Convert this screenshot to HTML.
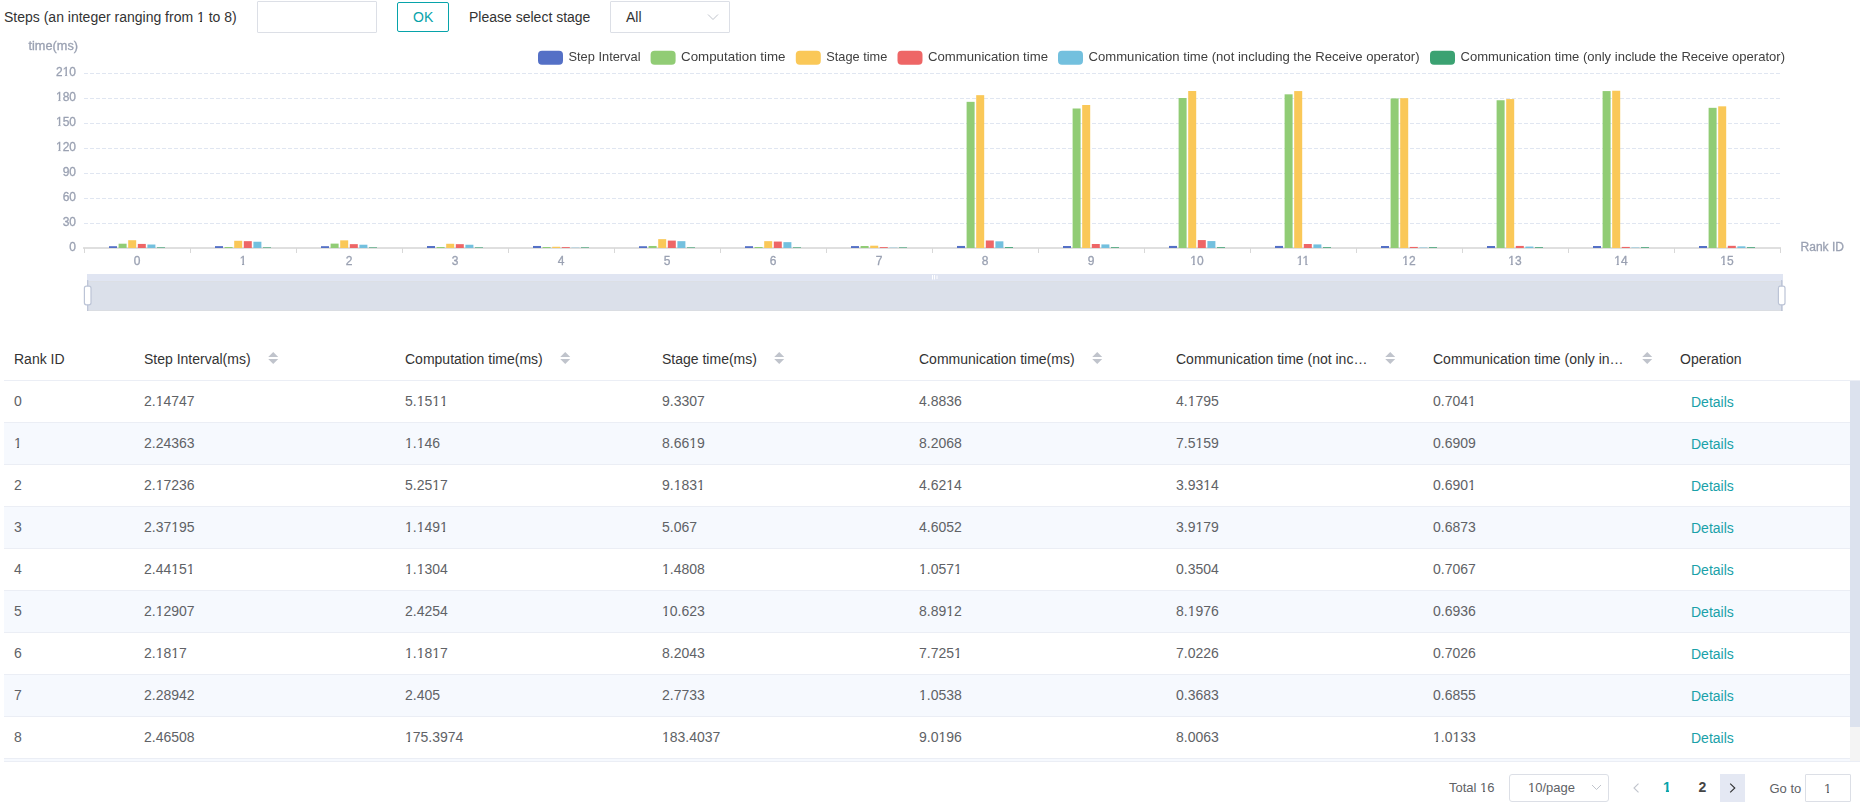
<!DOCTYPE html>
<html><head><meta charset="utf-8"><title>Rank stats</title>
<style>
html,body{margin:0;padding:0;background:#fff;}
body{width:1869px;height:808px;overflow:hidden;position:relative;font-family:'Liberation Sans', sans-serif;}
.a{position:absolute;white-space:nowrap;}
.t14{font-size:14px;line-height:20px;}
.t13{font-size:13px;line-height:20px;}
.box{position:absolute;box-sizing:border-box;background:#fff;}
.o14{display:inline-block;clip-path:polygon(-2px -2px,120% -2px,120% 13.85px,5.05px 13.85px,5.05px 22px,2.85px 22px,2.85px 13.85px,-2px 13.85px);}
.o13{display:inline-block;clip-path:polygon(-2px -2px,120% -2px,120% 12.85px,5.05px 12.85px,5.05px 22px,2.85px 22px,2.85px 12.85px,-2px 12.85px);}
.o14b{display:inline-block;clip-path:polygon(-2px -2px,120% -2px,120% 12.85px,6.05px 12.85px,6.05px 22px,2.9px 22px,2.9px 12.85px,-2px 12.85px);}
.o13b{display:inline-block;clip-path:polygon(-2px -2px,120% -2px,120% 12.6px,5.2px 12.6px,5.2px 22px,2.75px 22px,2.75px 12.6px,-2px 12.6px);}
</style></head><body>
<div class="a t14" style="left:4px;top:7px;color:#333;">Steps (an integer ranging from <span class="o14">1</span> to 8)</div>
<div class="box" style="left:257px;top:1px;width:120px;height:32px;border:1px solid #dcdfe6;border-radius:1px;"></div>
<div class="box" style="left:397px;top:2px;width:52px;height:30px;border:1px solid #07a3aa;border-radius:2px;"></div>
<div class="a t14" style="left:413px;top:7px;color:#07a3aa;">OK</div>
<div class="a t14" style="left:469px;top:7px;color:#333;">Please select stage</div>
<div class="box" style="left:610px;top:1px;width:120px;height:32px;border:1px solid #dcdfe6;border-radius:1px;"></div>
<div class="a t14" style="left:626px;top:7px;color:#333;">All</div>
<svg class="a" style="left:706.5px;top:13px" width="12" height="8" viewBox="0 0 12 8"><path d="M1 1.5 L6 6.5 L11 1.5" fill="none" stroke="#c0c4cc" stroke-width="1"/></svg>
<svg class="a" style="left:0;top:0;will-change:transform" width="1869" height="320" viewBox="0 0 1869 320" font-family="'Liberation Sans', sans-serif">
<text x="28.5" y="50" font-size="12" fill="#9aa1b2" stroke="#9aa1b2" stroke-width="0.3" textLength="49.5" lengthAdjust="spacingAndGlyphs">time(ms)</text>
<text x="76" y="250.8" font-size="12" fill="#9aa1b2" stroke="#9aa1b2" stroke-width="0.3" text-anchor="end">0</text>
<line x1="84" y1="223.5" x2="1781" y2="223.5" stroke="#e0e6f1" stroke-width="1" stroke-dasharray="4 2"/>
<text x="76" y="225.8" font-size="12" fill="#9aa1b2" stroke="#9aa1b2" stroke-width="0.3" text-anchor="end">30</text>
<line x1="84" y1="198.5" x2="1781" y2="198.5" stroke="#e0e6f1" stroke-width="1" stroke-dasharray="4 2"/>
<text x="76" y="200.8" font-size="12" fill="#9aa1b2" stroke="#9aa1b2" stroke-width="0.3" text-anchor="end">60</text>
<line x1="84" y1="173.5" x2="1781" y2="173.5" stroke="#e0e6f1" stroke-width="1" stroke-dasharray="4 2"/>
<text x="76" y="175.8" font-size="12" fill="#9aa1b2" stroke="#9aa1b2" stroke-width="0.3" text-anchor="end">90</text>
<line x1="84" y1="148.5" x2="1781" y2="148.5" stroke="#e0e6f1" stroke-width="1" stroke-dasharray="4 2"/>
<text x="76" y="150.8" font-size="12" fill="#9aa1b2" stroke="#9aa1b2" stroke-width="0.3" text-anchor="end">120</text>
<line x1="84" y1="123.5" x2="1781" y2="123.5" stroke="#e0e6f1" stroke-width="1" stroke-dasharray="4 2"/>
<text x="76" y="125.8" font-size="12" fill="#9aa1b2" stroke="#9aa1b2" stroke-width="0.3" text-anchor="end">150</text>
<line x1="84" y1="98.5" x2="1781" y2="98.5" stroke="#e0e6f1" stroke-width="1" stroke-dasharray="4 2"/>
<text x="76" y="100.8" font-size="12" fill="#9aa1b2" stroke="#9aa1b2" stroke-width="0.3" text-anchor="end">180</text>
<line x1="84" y1="73.5" x2="1781" y2="73.5" stroke="#e0e6f1" stroke-width="1" stroke-dasharray="4 2"/>
<text x="76" y="75.8" font-size="12" fill="#9aa1b2" stroke="#9aa1b2" stroke-width="0.3" text-anchor="end">210</text>
<line x1="83" y1="248" x2="1781" y2="248" stroke="#d4d4d4" stroke-width="1.5"/>
<line x1="84.5" y1="248" x2="84.5" y2="253" stroke="#d8d8d8" stroke-width="1"/>
<line x1="190.5" y1="248" x2="190.5" y2="253" stroke="#d8d8d8" stroke-width="1"/>
<line x1="296.5" y1="248" x2="296.5" y2="253" stroke="#d8d8d8" stroke-width="1"/>
<line x1="402.5" y1="248" x2="402.5" y2="253" stroke="#d8d8d8" stroke-width="1"/>
<line x1="508.5" y1="248" x2="508.5" y2="253" stroke="#d8d8d8" stroke-width="1"/>
<line x1="614.5" y1="248" x2="614.5" y2="253" stroke="#d8d8d8" stroke-width="1"/>
<line x1="720.5" y1="248" x2="720.5" y2="253" stroke="#d8d8d8" stroke-width="1"/>
<line x1="826.5" y1="248" x2="826.5" y2="253" stroke="#d8d8d8" stroke-width="1"/>
<line x1="932.5" y1="248" x2="932.5" y2="253" stroke="#d8d8d8" stroke-width="1"/>
<line x1="1038.5" y1="248" x2="1038.5" y2="253" stroke="#d8d8d8" stroke-width="1"/>
<line x1="1144.5" y1="248" x2="1144.5" y2="253" stroke="#d8d8d8" stroke-width="1"/>
<line x1="1250.5" y1="248" x2="1250.5" y2="253" stroke="#d8d8d8" stroke-width="1"/>
<line x1="1356.5" y1="248" x2="1356.5" y2="253" stroke="#d8d8d8" stroke-width="1"/>
<line x1="1462.5" y1="248" x2="1462.5" y2="253" stroke="#d8d8d8" stroke-width="1"/>
<line x1="1568.5" y1="248" x2="1568.5" y2="253" stroke="#d8d8d8" stroke-width="1"/>
<line x1="1674.5" y1="248" x2="1674.5" y2="253" stroke="#d8d8d8" stroke-width="1"/>
<line x1="1780.5" y1="248" x2="1780.5" y2="253" stroke="#d8d8d8" stroke-width="1"/>
<text x="137" y="265" font-size="12" fill="#9aa1b2" stroke="#9aa1b2" stroke-width="0.3" text-anchor="middle">0</text>
<text x="243" y="265" font-size="12" fill="#9aa1b2" stroke="#9aa1b2" stroke-width="0.3" text-anchor="middle">1</text>
<text x="349" y="265" font-size="12" fill="#9aa1b2" stroke="#9aa1b2" stroke-width="0.3" text-anchor="middle">2</text>
<text x="455" y="265" font-size="12" fill="#9aa1b2" stroke="#9aa1b2" stroke-width="0.3" text-anchor="middle">3</text>
<text x="561" y="265" font-size="12" fill="#9aa1b2" stroke="#9aa1b2" stroke-width="0.3" text-anchor="middle">4</text>
<text x="667" y="265" font-size="12" fill="#9aa1b2" stroke="#9aa1b2" stroke-width="0.3" text-anchor="middle">5</text>
<text x="773" y="265" font-size="12" fill="#9aa1b2" stroke="#9aa1b2" stroke-width="0.3" text-anchor="middle">6</text>
<text x="879" y="265" font-size="12" fill="#9aa1b2" stroke="#9aa1b2" stroke-width="0.3" text-anchor="middle">7</text>
<text x="985" y="265" font-size="12" fill="#9aa1b2" stroke="#9aa1b2" stroke-width="0.3" text-anchor="middle">8</text>
<text x="1091" y="265" font-size="12" fill="#9aa1b2" stroke="#9aa1b2" stroke-width="0.3" text-anchor="middle">9</text>
<text x="1197" y="265" font-size="12" fill="#9aa1b2" stroke="#9aa1b2" stroke-width="0.3" text-anchor="middle">10</text>
<text x="1303" y="265" font-size="12" fill="#9aa1b2" stroke="#9aa1b2" stroke-width="0.3" text-anchor="middle">11</text>
<text x="1409" y="265" font-size="12" fill="#9aa1b2" stroke="#9aa1b2" stroke-width="0.3" text-anchor="middle">12</text>
<text x="1515" y="265" font-size="12" fill="#9aa1b2" stroke="#9aa1b2" stroke-width="0.3" text-anchor="middle">13</text>
<text x="1621" y="265" font-size="12" fill="#9aa1b2" stroke="#9aa1b2" stroke-width="0.3" text-anchor="middle">14</text>
<text x="1727" y="265" font-size="12" fill="#9aa1b2" stroke="#9aa1b2" stroke-width="0.3" text-anchor="middle">15</text>
<rect x="55.38" y="149.55" width="2.9" height="2.3" fill="#fff"/>
<rect x="60.53" y="149.55" width="2.4" height="2.3" fill="#fff"/>
<rect x="58.18" y="150.90" width="2.5" height="1" fill="#fff"/>
<rect x="55.38" y="124.55" width="2.9" height="2.3" fill="#fff"/>
<rect x="60.53" y="124.55" width="2.4" height="2.3" fill="#fff"/>
<rect x="58.18" y="125.90" width="2.5" height="1" fill="#fff"/>
<rect x="55.38" y="99.55" width="2.9" height="2.3" fill="#fff"/>
<rect x="60.53" y="99.55" width="2.4" height="2.3" fill="#fff"/>
<rect x="58.18" y="100.90" width="2.5" height="1" fill="#fff"/>
<rect x="62.06" y="74.55" width="2.9" height="2.3" fill="#fff"/>
<rect x="67.21" y="74.55" width="2.4" height="2.3" fill="#fff"/>
<rect x="64.86" y="75.90" width="2.5" height="1" fill="#fff"/>
<rect x="239.06" y="263.75" width="2.9" height="2.3" fill="#fff"/>
<rect x="244.21" y="263.75" width="2.4" height="2.3" fill="#fff"/>
<rect x="241.86" y="265.10" width="2.5" height="1" fill="#fff"/>
<rect x="1189.73" y="263.75" width="2.9" height="2.3" fill="#fff"/>
<rect x="1194.88" y="263.75" width="2.4" height="2.3" fill="#fff"/>
<rect x="1192.53" y="265.10" width="2.5" height="1" fill="#fff"/>
<rect x="1295.73" y="263.75" width="2.9" height="2.3" fill="#fff"/>
<rect x="1300.88" y="263.75" width="2.4" height="2.3" fill="#fff"/>
<rect x="1298.53" y="265.10" width="2.5" height="1" fill="#fff"/>
<rect x="1302.40" y="263.75" width="2.9" height="2.3" fill="#fff"/>
<rect x="1307.55" y="263.75" width="2.4" height="2.3" fill="#fff"/>
<rect x="1305.20" y="265.10" width="2.5" height="1" fill="#fff"/>
<rect x="1401.73" y="263.75" width="2.9" height="2.3" fill="#fff"/>
<rect x="1406.88" y="263.75" width="2.4" height="2.3" fill="#fff"/>
<rect x="1404.53" y="265.10" width="2.5" height="1" fill="#fff"/>
<rect x="1507.73" y="263.75" width="2.9" height="2.3" fill="#fff"/>
<rect x="1512.88" y="263.75" width="2.4" height="2.3" fill="#fff"/>
<rect x="1510.53" y="265.10" width="2.5" height="1" fill="#fff"/>
<rect x="1613.73" y="263.75" width="2.9" height="2.3" fill="#fff"/>
<rect x="1618.88" y="263.75" width="2.4" height="2.3" fill="#fff"/>
<rect x="1616.53" y="265.10" width="2.5" height="1" fill="#fff"/>
<rect x="1719.73" y="263.75" width="2.9" height="2.3" fill="#fff"/>
<rect x="1724.88" y="263.75" width="2.4" height="2.3" fill="#fff"/>
<rect x="1722.53" y="265.10" width="2.5" height="1" fill="#fff"/>
<text x="1800.5" y="251" font-size="12" fill="#9aa1b2" stroke="#9aa1b2" stroke-width="0.3" textLength="43.5" lengthAdjust="spacingAndGlyphs">Rank ID</text>
<rect x="109.00" y="246.21" width="8" height="1.79" fill="#5470c6"/>
<rect x="118.60" y="243.71" width="8" height="4.29" fill="#91cc75"/>
<rect x="128.20" y="240.22" width="8" height="7.78" fill="#fac858"/>
<rect x="137.80" y="243.93" width="8" height="4.07" fill="#ee6666"/>
<rect x="147.40" y="244.52" width="8" height="3.48" fill="#73c0de"/>
<rect x="157.00" y="247.41" width="8" height="0.59" fill="#3ba272"/>
<rect x="215.00" y="246.13" width="8" height="1.87" fill="#5470c6"/>
<rect x="224.60" y="247.04" width="8" height="0.95" fill="#91cc75"/>
<rect x="234.20" y="240.78" width="8" height="7.22" fill="#fac858"/>
<rect x="243.80" y="241.16" width="8" height="6.84" fill="#ee6666"/>
<rect x="253.40" y="241.74" width="8" height="6.26" fill="#73c0de"/>
<rect x="263.00" y="247.42" width="8" height="0.58" fill="#3ba272"/>
<rect x="321.00" y="246.19" width="8" height="1.81" fill="#5470c6"/>
<rect x="330.60" y="243.62" width="8" height="4.38" fill="#91cc75"/>
<rect x="340.20" y="240.35" width="8" height="7.65" fill="#fac858"/>
<rect x="349.80" y="244.15" width="8" height="3.85" fill="#ee6666"/>
<rect x="359.40" y="244.72" width="8" height="3.28" fill="#73c0de"/>
<rect x="369.00" y="247.42" width="8" height="0.58" fill="#3ba272"/>
<rect x="427.00" y="246.02" width="8" height="1.98" fill="#5470c6"/>
<rect x="436.60" y="247.04" width="8" height="0.96" fill="#91cc75"/>
<rect x="446.20" y="243.78" width="8" height="4.22" fill="#fac858"/>
<rect x="455.80" y="244.16" width="8" height="3.84" fill="#ee6666"/>
<rect x="465.40" y="244.74" width="8" height="3.26" fill="#73c0de"/>
<rect x="475.00" y="247.43" width="8" height="0.57" fill="#3ba272"/>
<rect x="533.00" y="245.97" width="8" height="2.03" fill="#5470c6"/>
<rect x="542.60" y="247.06" width="8" height="0.94" fill="#91cc75"/>
<rect x="552.20" y="246.77" width="8" height="1.23" fill="#fac858"/>
<rect x="561.80" y="247.12" width="8" height="0.88" fill="#ee6666"/>
<rect x="571.40" y="247.71" width="8" height="0.29" fill="#73c0de"/>
<rect x="581.00" y="247.41" width="8" height="0.59" fill="#3ba272"/>
<rect x="639.00" y="246.23" width="8" height="1.77" fill="#5470c6"/>
<rect x="648.60" y="245.98" width="8" height="2.02" fill="#91cc75"/>
<rect x="658.20" y="239.15" width="8" height="8.85" fill="#fac858"/>
<rect x="667.80" y="240.59" width="8" height="7.41" fill="#ee6666"/>
<rect x="677.40" y="241.17" width="8" height="6.83" fill="#73c0de"/>
<rect x="687.00" y="247.42" width="8" height="0.58" fill="#3ba272"/>
<rect x="745.00" y="246.18" width="8" height="1.82" fill="#5470c6"/>
<rect x="754.60" y="247.02" width="8" height="0.98" fill="#91cc75"/>
<rect x="764.20" y="241.16" width="8" height="6.84" fill="#fac858"/>
<rect x="773.80" y="241.56" width="8" height="6.44" fill="#ee6666"/>
<rect x="783.40" y="242.15" width="8" height="5.85" fill="#73c0de"/>
<rect x="793.00" y="247.41" width="8" height="0.59" fill="#3ba272"/>
<rect x="851.00" y="246.09" width="8" height="1.91" fill="#5470c6"/>
<rect x="860.60" y="246.00" width="8" height="2.00" fill="#91cc75"/>
<rect x="870.20" y="245.69" width="8" height="2.31" fill="#fac858"/>
<rect x="879.80" y="247.12" width="8" height="0.88" fill="#ee6666"/>
<rect x="889.40" y="247.69" width="8" height="0.31" fill="#73c0de"/>
<rect x="899.00" y="247.43" width="8" height="0.57" fill="#3ba272"/>
<rect x="957.00" y="245.95" width="8" height="2.05" fill="#5470c6"/>
<rect x="966.60" y="101.84" width="8" height="146.16" fill="#91cc75"/>
<rect x="976.20" y="95.16" width="8" height="152.84" fill="#fac858"/>
<rect x="985.80" y="240.48" width="8" height="7.52" fill="#ee6666"/>
<rect x="995.40" y="241.33" width="8" height="6.67" fill="#73c0de"/>
<rect x="1005.00" y="247.16" width="8" height="0.84" fill="#3ba272"/>
<rect x="1063.00" y="246.00" width="8" height="2.00" fill="#5470c6"/>
<rect x="1072.60" y="108.50" width="8" height="139.50" fill="#91cc75"/>
<rect x="1082.20" y="105.00" width="8" height="143.00" fill="#fac858"/>
<rect x="1091.80" y="244.00" width="8" height="4.00" fill="#ee6666"/>
<rect x="1101.40" y="244.42" width="8" height="3.58" fill="#73c0de"/>
<rect x="1111.00" y="247.25" width="8" height="0.75" fill="#3ba272"/>
<rect x="1169.00" y="245.92" width="8" height="2.08" fill="#5470c6"/>
<rect x="1178.60" y="98.00" width="8" height="150.00" fill="#91cc75"/>
<rect x="1188.20" y="91.00" width="8" height="157.00" fill="#fac858"/>
<rect x="1197.80" y="240.08" width="8" height="7.92" fill="#ee6666"/>
<rect x="1207.40" y="241.08" width="8" height="6.92" fill="#73c0de"/>
<rect x="1217.00" y="247.25" width="8" height="0.75" fill="#3ba272"/>
<rect x="1275.00" y="245.92" width="8" height="2.08" fill="#5470c6"/>
<rect x="1284.60" y="94.33" width="8" height="153.67" fill="#91cc75"/>
<rect x="1294.20" y="91.08" width="8" height="156.92" fill="#fac858"/>
<rect x="1303.80" y="244.00" width="8" height="4.00" fill="#ee6666"/>
<rect x="1313.40" y="244.42" width="8" height="3.58" fill="#73c0de"/>
<rect x="1323.00" y="247.25" width="8" height="0.75" fill="#3ba272"/>
<rect x="1381.00" y="246.00" width="8" height="2.00" fill="#5470c6"/>
<rect x="1390.60" y="98.42" width="8" height="149.58" fill="#91cc75"/>
<rect x="1400.20" y="98.17" width="8" height="149.83" fill="#fac858"/>
<rect x="1409.80" y="246.92" width="8" height="1.08" fill="#ee6666"/>
<rect x="1419.40" y="247.58" width="8" height="0.42" fill="#73c0de"/>
<rect x="1429.00" y="247.25" width="8" height="0.75" fill="#3ba272"/>
<rect x="1487.00" y="246.00" width="8" height="2.00" fill="#5470c6"/>
<rect x="1496.60" y="100.25" width="8" height="147.75" fill="#91cc75"/>
<rect x="1506.20" y="99.08" width="8" height="148.92" fill="#fac858"/>
<rect x="1515.80" y="245.92" width="8" height="2.08" fill="#ee6666"/>
<rect x="1525.40" y="246.58" width="8" height="1.42" fill="#73c0de"/>
<rect x="1535.00" y="247.25" width="8" height="0.75" fill="#3ba272"/>
<rect x="1593.00" y="246.00" width="8" height="2.00" fill="#5470c6"/>
<rect x="1602.60" y="91.08" width="8" height="156.92" fill="#91cc75"/>
<rect x="1612.20" y="90.75" width="8" height="157.25" fill="#fac858"/>
<rect x="1621.80" y="246.92" width="8" height="1.08" fill="#ee6666"/>
<rect x="1631.40" y="247.58" width="8" height="0.42" fill="#73c0de"/>
<rect x="1641.00" y="247.25" width="8" height="0.75" fill="#3ba272"/>
<rect x="1699.00" y="246.00" width="8" height="2.00" fill="#5470c6"/>
<rect x="1708.60" y="107.83" width="8" height="140.17" fill="#91cc75"/>
<rect x="1718.20" y="106.33" width="8" height="141.67" fill="#fac858"/>
<rect x="1727.80" y="245.83" width="8" height="2.17" fill="#ee6666"/>
<rect x="1737.40" y="246.33" width="8" height="1.67" fill="#73c0de"/>
<rect x="1747.00" y="247.25" width="8" height="0.75" fill="#3ba272"/>
<rect x="538" y="50.8" width="25" height="14" rx="4" fill="#5470c6"/>
<text x="568.5" y="60.6" font-size="13" fill="#404040" textLength="72" lengthAdjust="spacingAndGlyphs">Step Interval</text>
<rect x="650.6" y="50.8" width="25" height="14" rx="4" fill="#91cc75"/>
<text x="681.1" y="60.6" font-size="13" fill="#404040" textLength="104.4" lengthAdjust="spacingAndGlyphs">Computation time</text>
<rect x="795.8" y="50.8" width="25" height="14" rx="4" fill="#fac858"/>
<text x="826.3" y="60.6" font-size="13" fill="#404040" textLength="61" lengthAdjust="spacingAndGlyphs">Stage time</text>
<rect x="897.5" y="50.8" width="25" height="14" rx="4" fill="#ee6666"/>
<text x="928.0" y="60.6" font-size="13" fill="#404040" textLength="120" lengthAdjust="spacingAndGlyphs">Communication time</text>
<rect x="1058" y="50.8" width="25" height="14" rx="4" fill="#73c0de"/>
<text x="1088.5" y="60.6" font-size="13" fill="#404040" textLength="331" lengthAdjust="spacingAndGlyphs">Communication time (not including the Receive operator)</text>
<rect x="1430" y="50.8" width="25" height="14" rx="4" fill="#3ba272"/>
<text x="1460.5" y="60.6" font-size="13" fill="#404040" textLength="324.5" lengthAdjust="spacingAndGlyphs">Communication time (only include the Receive operator)</text>
<rect x="87" y="274" width="1696" height="37" fill="#dbe0ea"/>
<rect x="87" y="274" width="1696" height="7" fill="#e0e5f2"/>
<line x1="87" y1="281.5" x2="1783" y2="281.5" stroke="#dcdfe5" stroke-width="1"/>
<line x1="87" y1="310.5" x2="1783" y2="310.5" stroke="#dadde2" stroke-width="1"/>
<g fill="#fff"><rect x="932" y="275" width="1" height="4.5"/><rect x="934" y="275" width="1" height="4.5"/><rect x="936" y="275.5" width="2" height="3.5" opacity="0.5"/></g>
<line x1="87.7" y1="280" x2="87.7" y2="311" stroke="#bcc4d6" stroke-width="1.2"/>
<rect x="84.4" y="286.2" width="6.6" height="18.6" rx="2" fill="#fff" stroke="#bcc4d6" stroke-width="1.2"/>
<line x1="1781.7" y1="280" x2="1781.7" y2="311" stroke="#bcc4d6" stroke-width="1.2"/>
<rect x="1778.4" y="286.2" width="6.6" height="18.6" rx="2" fill="#fff" stroke="#bcc4d6" stroke-width="1.2"/>
</svg>
<div class="a" style="left:4px;top:380px;width:1856px;height:1px;background:#ebeef5"></div>
<div class="a" style="left:4px;top:422px;width:1846px;height:1px;background:#ebeef5"></div>
<div class="a" style="left:4px;top:423px;width:1846px;height:41px;background:#f6f9fe"></div>
<div class="a" style="left:4px;top:464px;width:1846px;height:1px;background:#ebeef5"></div>
<div class="a" style="left:4px;top:506px;width:1846px;height:1px;background:#ebeef5"></div>
<div class="a" style="left:4px;top:507px;width:1846px;height:41px;background:#f6f9fe"></div>
<div class="a" style="left:4px;top:548px;width:1846px;height:1px;background:#ebeef5"></div>
<div class="a" style="left:4px;top:590px;width:1846px;height:1px;background:#ebeef5"></div>
<div class="a" style="left:4px;top:591px;width:1846px;height:41px;background:#f6f9fe"></div>
<div class="a" style="left:4px;top:632px;width:1846px;height:1px;background:#ebeef5"></div>
<div class="a" style="left:4px;top:674px;width:1846px;height:1px;background:#ebeef5"></div>
<div class="a" style="left:4px;top:675px;width:1846px;height:41px;background:#f6f9fe"></div>
<div class="a" style="left:4px;top:716px;width:1846px;height:1px;background:#ebeef5"></div>
<div class="a" style="left:4px;top:758px;width:1846px;height:1px;background:#ebeef5"></div>
<div class="a" style="left:4px;top:759px;width:1846px;height:2px;background:#f6f9fe"></div>
<div class="a" style="left:4px;top:761px;width:1856px;height:1px;background:#ebeef5"></div>
<div class="a" style="left:1850px;top:381px;width:10px;height:380px;background:#f4f4f4"></div>
<div class="a" style="left:1850px;top:381px;width:10px;height:346px;background:#dce2ee"></div>
<div class="a t14" style="left:14px;top:349px;color:#333;">Rank ID</div>
<div class="a t14" style="left:144px;top:349px;color:#333;">Step Interval(ms)</div>
<svg class="a" style="left:267.8px;top:351px" width="11" height="14" viewBox="0 0 11 14"><path d="M0.2 6 L5.2 1 L10.2 6 Z M0.2 8 L5.2 13 L10.2 8 Z" fill="#c0c4cc"/></svg>
<div class="a t14" style="left:405px;top:349px;color:#333;">Computation time(ms)</div>
<svg class="a" style="left:560px;top:351px" width="11" height="14" viewBox="0 0 11 14"><path d="M0.2 6 L5.2 1 L10.2 6 Z M0.2 8 L5.2 13 L10.2 8 Z" fill="#c0c4cc"/></svg>
<div class="a t14" style="left:662px;top:349px;color:#333;">Stage time(ms)</div>
<svg class="a" style="left:773.9px;top:351px" width="11" height="14" viewBox="0 0 11 14"><path d="M0.2 6 L5.2 1 L10.2 6 Z M0.2 8 L5.2 13 L10.2 8 Z" fill="#c0c4cc"/></svg>
<div class="a t14" style="left:919px;top:349px;color:#333;">Communication time(ms)</div>
<svg class="a" style="left:1092px;top:351px" width="11" height="14" viewBox="0 0 11 14"><path d="M0.2 6 L5.2 1 L10.2 6 Z M0.2 8 L5.2 13 L10.2 8 Z" fill="#c0c4cc"/></svg>
<div class="a t14" style="left:1176px;top:349px;color:#333;">Communication time (not inc…</div>
<svg class="a" style="left:1385px;top:351px" width="11" height="14" viewBox="0 0 11 14"><path d="M0.2 6 L5.2 1 L10.2 6 Z M0.2 8 L5.2 13 L10.2 8 Z" fill="#c0c4cc"/></svg>
<div class="a t14" style="left:1433px;top:349px;color:#333;">Communication time (only in…</div>
<svg class="a" style="left:1642.2px;top:351px" width="11" height="14" viewBox="0 0 11 14"><path d="M0.2 6 L5.2 1 L10.2 6 Z M0.2 8 L5.2 13 L10.2 8 Z" fill="#c0c4cc"/></svg>
<div class="a t14" style="left:1680px;top:349px;color:#333;">Operation</div>
<div class="a t14" style="left:14px;top:391px;color:#606266;">0</div>
<div class="a t14" style="left:144px;top:391px;color:#606266;">2.<span class="o14">1</span>4747</div>
<div class="a t14" style="left:405px;top:391px;color:#606266;">5.<span class="o14">1</span>5<span class="o14">1</span><span class="o14">1</span></div>
<div class="a t14" style="left:662px;top:391px;color:#606266;">9.3307</div>
<div class="a t14" style="left:919px;top:391px;color:#606266;">4.8836</div>
<div class="a t14" style="left:1176px;top:391px;color:#606266;">4.<span class="o14">1</span>795</div>
<div class="a t14" style="left:1433px;top:391px;color:#606266;">0.704<span class="o14">1</span></div>
<div class="a t14" style="left:1691px;top:392px;color:#1aa1a9;">Details</div>
<div class="a t14" style="left:14px;top:433px;color:#606266;"><span class="o14">1</span></div>
<div class="a t14" style="left:144px;top:433px;color:#606266;">2.24363</div>
<div class="a t14" style="left:405px;top:433px;color:#606266;"><span class="o14">1</span>.<span class="o14">1</span>46</div>
<div class="a t14" style="left:662px;top:433px;color:#606266;">8.66<span class="o14">1</span>9</div>
<div class="a t14" style="left:919px;top:433px;color:#606266;">8.2068</div>
<div class="a t14" style="left:1176px;top:433px;color:#606266;">7.5<span class="o14">1</span>59</div>
<div class="a t14" style="left:1433px;top:433px;color:#606266;">0.6909</div>
<div class="a t14" style="left:1691px;top:434px;color:#1aa1a9;">Details</div>
<div class="a t14" style="left:14px;top:475px;color:#606266;">2</div>
<div class="a t14" style="left:144px;top:475px;color:#606266;">2.<span class="o14">1</span>7236</div>
<div class="a t14" style="left:405px;top:475px;color:#606266;">5.25<span class="o14">1</span>7</div>
<div class="a t14" style="left:662px;top:475px;color:#606266;">9.<span class="o14">1</span>83<span class="o14">1</span></div>
<div class="a t14" style="left:919px;top:475px;color:#606266;">4.62<span class="o14">1</span>4</div>
<div class="a t14" style="left:1176px;top:475px;color:#606266;">3.93<span class="o14">1</span>4</div>
<div class="a t14" style="left:1433px;top:475px;color:#606266;">0.690<span class="o14">1</span></div>
<div class="a t14" style="left:1691px;top:476px;color:#1aa1a9;">Details</div>
<div class="a t14" style="left:14px;top:517px;color:#606266;">3</div>
<div class="a t14" style="left:144px;top:517px;color:#606266;">2.37<span class="o14">1</span>95</div>
<div class="a t14" style="left:405px;top:517px;color:#606266;"><span class="o14">1</span>.<span class="o14">1</span>49<span class="o14">1</span></div>
<div class="a t14" style="left:662px;top:517px;color:#606266;">5.067</div>
<div class="a t14" style="left:919px;top:517px;color:#606266;">4.6052</div>
<div class="a t14" style="left:1176px;top:517px;color:#606266;">3.9<span class="o14">1</span>79</div>
<div class="a t14" style="left:1433px;top:517px;color:#606266;">0.6873</div>
<div class="a t14" style="left:1691px;top:518px;color:#1aa1a9;">Details</div>
<div class="a t14" style="left:14px;top:559px;color:#606266;">4</div>
<div class="a t14" style="left:144px;top:559px;color:#606266;">2.44<span class="o14">1</span>5<span class="o14">1</span></div>
<div class="a t14" style="left:405px;top:559px;color:#606266;"><span class="o14">1</span>.<span class="o14">1</span>304</div>
<div class="a t14" style="left:662px;top:559px;color:#606266;"><span class="o14">1</span>.4808</div>
<div class="a t14" style="left:919px;top:559px;color:#606266;"><span class="o14">1</span>.057<span class="o14">1</span></div>
<div class="a t14" style="left:1176px;top:559px;color:#606266;">0.3504</div>
<div class="a t14" style="left:1433px;top:559px;color:#606266;">0.7067</div>
<div class="a t14" style="left:1691px;top:560px;color:#1aa1a9;">Details</div>
<div class="a t14" style="left:14px;top:601px;color:#606266;">5</div>
<div class="a t14" style="left:144px;top:601px;color:#606266;">2.<span class="o14">1</span>2907</div>
<div class="a t14" style="left:405px;top:601px;color:#606266;">2.4254</div>
<div class="a t14" style="left:662px;top:601px;color:#606266;"><span class="o14">1</span>0.623</div>
<div class="a t14" style="left:919px;top:601px;color:#606266;">8.89<span class="o14">1</span>2</div>
<div class="a t14" style="left:1176px;top:601px;color:#606266;">8.<span class="o14">1</span>976</div>
<div class="a t14" style="left:1433px;top:601px;color:#606266;">0.6936</div>
<div class="a t14" style="left:1691px;top:602px;color:#1aa1a9;">Details</div>
<div class="a t14" style="left:14px;top:643px;color:#606266;">6</div>
<div class="a t14" style="left:144px;top:643px;color:#606266;">2.<span class="o14">1</span>8<span class="o14">1</span>7</div>
<div class="a t14" style="left:405px;top:643px;color:#606266;"><span class="o14">1</span>.<span class="o14">1</span>8<span class="o14">1</span>7</div>
<div class="a t14" style="left:662px;top:643px;color:#606266;">8.2043</div>
<div class="a t14" style="left:919px;top:643px;color:#606266;">7.725<span class="o14">1</span></div>
<div class="a t14" style="left:1176px;top:643px;color:#606266;">7.0226</div>
<div class="a t14" style="left:1433px;top:643px;color:#606266;">0.7026</div>
<div class="a t14" style="left:1691px;top:644px;color:#1aa1a9;">Details</div>
<div class="a t14" style="left:14px;top:685px;color:#606266;">7</div>
<div class="a t14" style="left:144px;top:685px;color:#606266;">2.28942</div>
<div class="a t14" style="left:405px;top:685px;color:#606266;">2.405</div>
<div class="a t14" style="left:662px;top:685px;color:#606266;">2.7733</div>
<div class="a t14" style="left:919px;top:685px;color:#606266;"><span class="o14">1</span>.0538</div>
<div class="a t14" style="left:1176px;top:685px;color:#606266;">0.3683</div>
<div class="a t14" style="left:1433px;top:685px;color:#606266;">0.6855</div>
<div class="a t14" style="left:1691px;top:686px;color:#1aa1a9;">Details</div>
<div class="a t14" style="left:14px;top:727px;color:#606266;">8</div>
<div class="a t14" style="left:144px;top:727px;color:#606266;">2.46508</div>
<div class="a t14" style="left:405px;top:727px;color:#606266;"><span class="o14">1</span>75.3974</div>
<div class="a t14" style="left:662px;top:727px;color:#606266;"><span class="o14">1</span>83.4037</div>
<div class="a t14" style="left:919px;top:727px;color:#606266;">9.0<span class="o14">1</span>96</div>
<div class="a t14" style="left:1176px;top:727px;color:#606266;">8.0063</div>
<div class="a t14" style="left:1433px;top:727px;color:#606266;"><span class="o14">1</span>.0<span class="o14">1</span>33</div>
<div class="a t14" style="left:1691px;top:728px;color:#1aa1a9;">Details</div>
<div class="a t13" style="left:1449px;top:778px;color:#606266;">Total <span class="o13">1</span>6</div>
<div class="box" style="left:1509px;top:774px;width:100px;height:28px;border:1px solid #dcdfe6;border-radius:3px;"></div>
<div class="a t13" style="left:1528px;top:778px;color:#606266;"><span class="o13">1</span>0/page</div>
<svg class="a" style="left:1591px;top:784px" width="11" height="7" viewBox="0 0 11 7"><path d="M1 1 L5.5 5.5 L10 1" fill="none" stroke="#c0c4cc" stroke-width="1"/></svg>
<svg class="a" style="left:1631px;top:781.5px" width="10" height="12" viewBox="0 0 10 12"><path d="M7.5 1.6 L3 6 L7.5 10.4" fill="none" stroke="#c0c4cc" stroke-width="1.1"/></svg>
<div class="a t14" style="left:1663px;top:777px;color:#07a3aa;font-weight:bold"><span class="o14b">1</span></div>
<div class="a t14" style="left:1698.5px;top:777px;color:#454545;font-weight:bold">2</div>
<div class="a" style="left:1720px;top:774px;width:25px;height:28px;background:#e4e8f3"></div>
<svg class="a" style="left:1728px;top:781.5px" width="10" height="12" viewBox="0 0 10 12"><path d="M2.2 1.6 L6.8 6 L2.2 10.4" fill="none" stroke="#303133" stroke-width="1.1"/></svg>
<div class="a t13" style="left:1769.5px;top:779px;color:#606266;">Go to</div>
<div class="box" style="left:1805px;top:774px;width:46px;height:28px;border:1px solid #dcdfe6;border-radius:1px;"></div>
<div class="a t13" style="left:1824px;top:779px;color:#606266;"><span class="o13">1</span></div>
</body></html>
